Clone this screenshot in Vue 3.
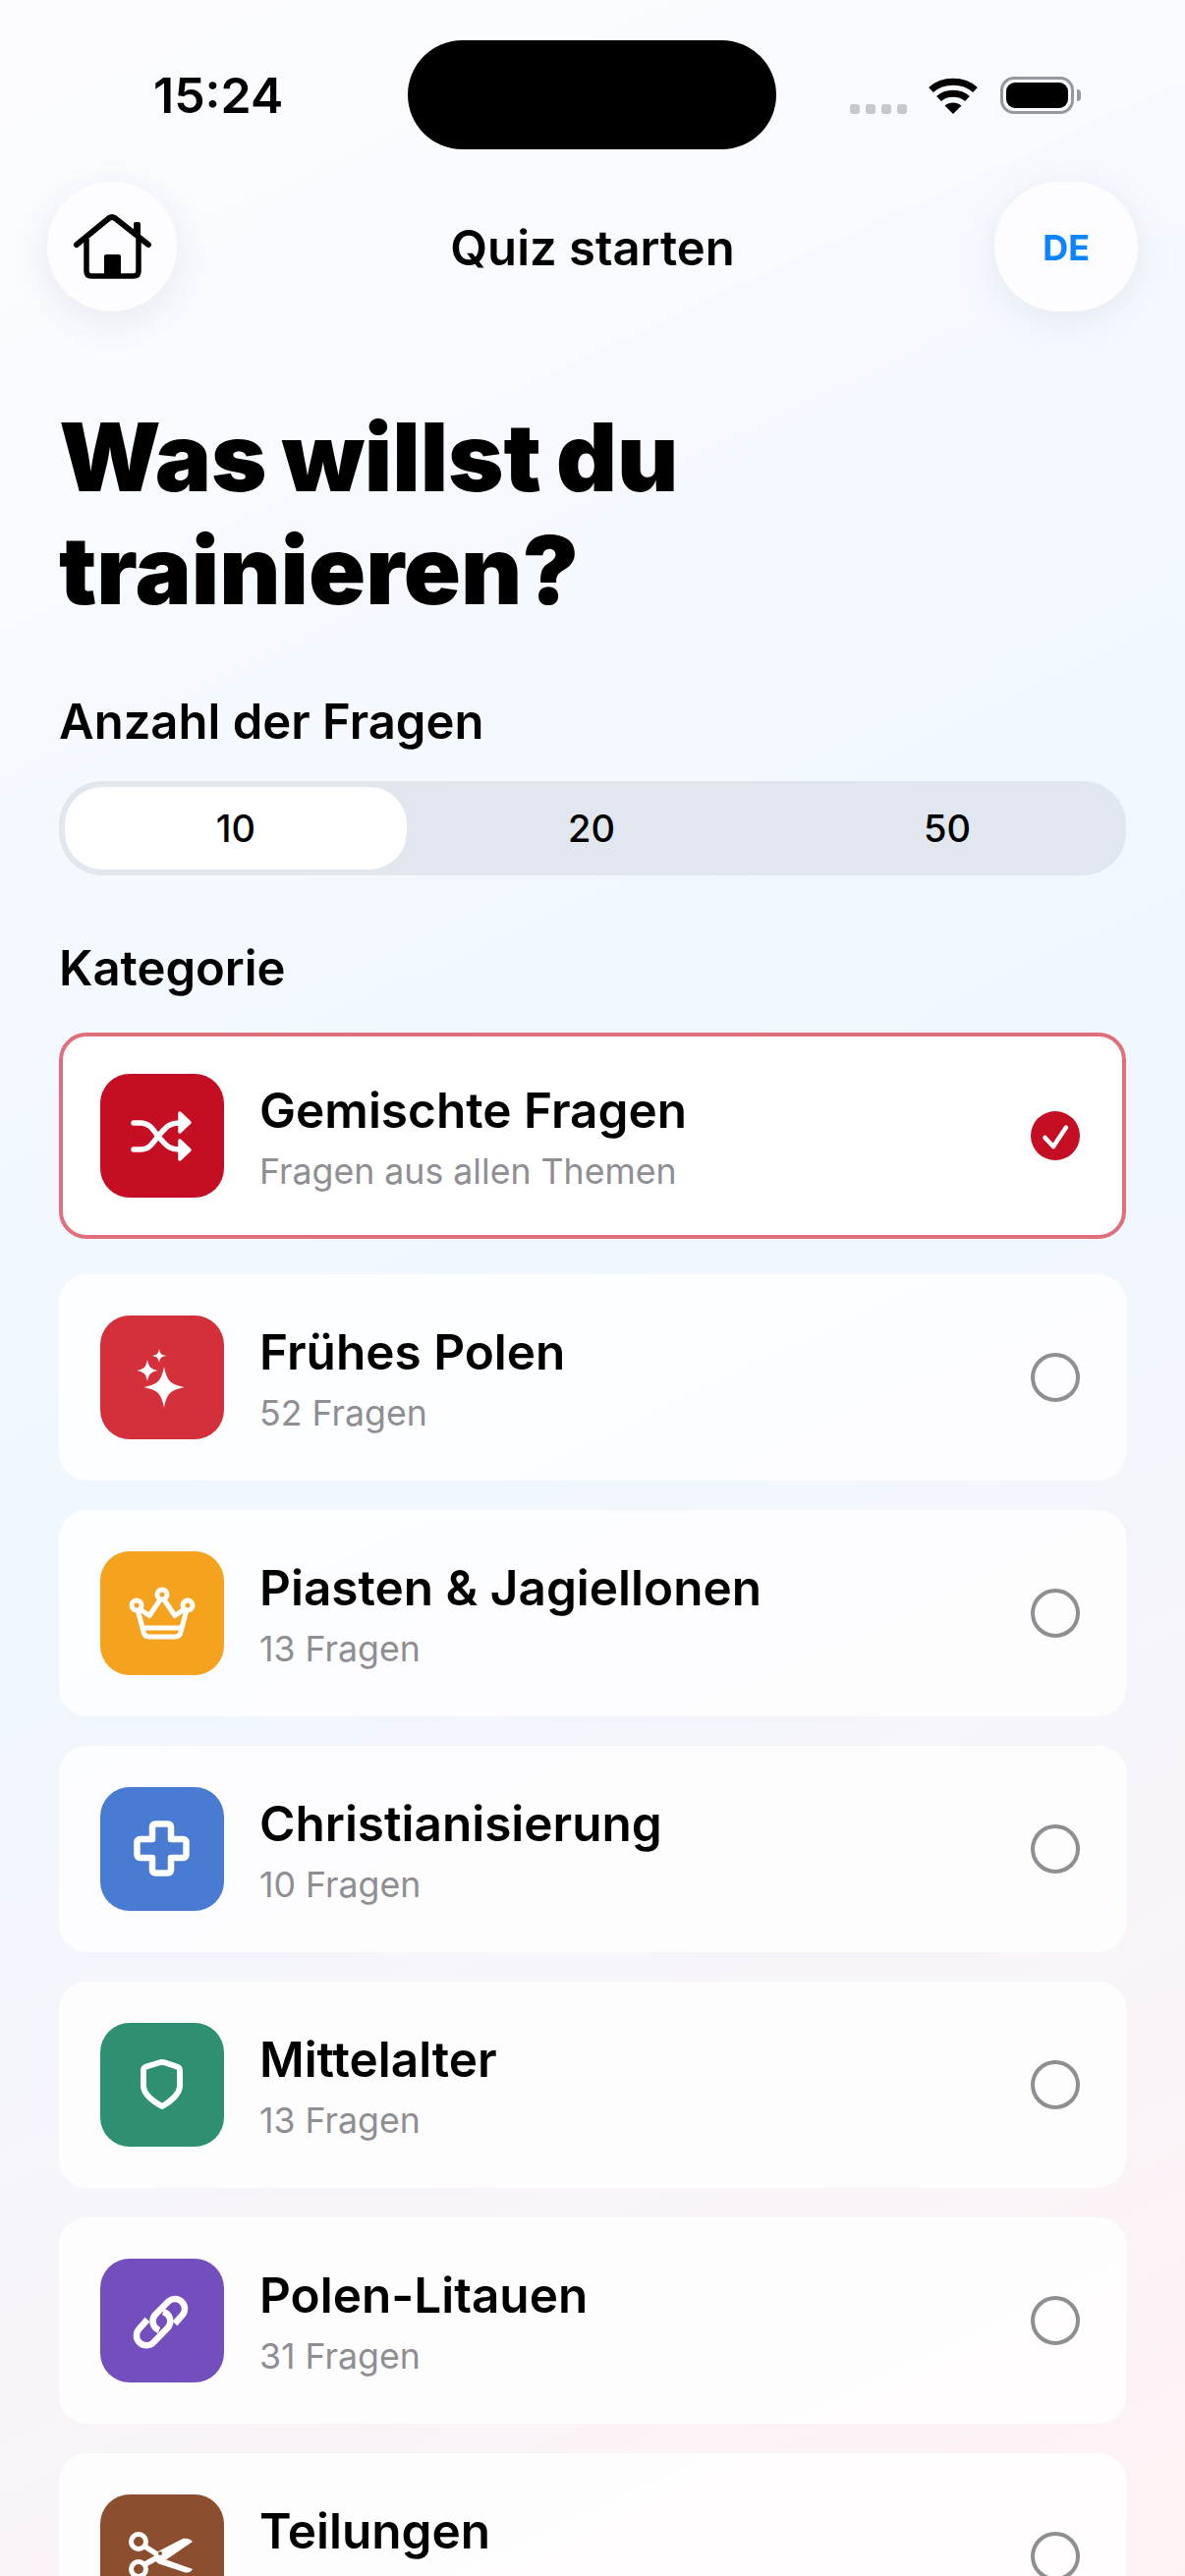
<template>
  <div class="screen">
    <div class="status-bar">
      <span class="time">15:24</span>
      <div class="island"></div>
      <div class="status-icons">
        <div class="signal">
          <i v-for="n in 4" :key="n"></i>
        </div>
        <svg class="wifi" width="50" height="37" viewBox="0 0 50 37">
          <path d="M2.5 12.5C14.5 1.5 35.5 1.5 47.5 12.5" fill="none" stroke="#000" stroke-width="7" />
          <path d="M10.5 21.5C18 14.5 32 14.5 39.5 21.5" fill="none" stroke="#000" stroke-width="7" />
          <path d="M25 37L16.5 28.5C21.5 24.5 28.5 24.5 33.5 28.5Z" fill="#000" />
        </svg>
        <div class="battery">
          <div class="battery-body"><div class="battery-fill"></div></div>
          <div class="battery-nub"></div>
        </div>
      </div>
    </div>

    <div class="nav">
      <button class="nav-btn home-btn">
        <svg width="132" height="132" viewBox="0 0 132 132">
          <path d="M30 64L63 37Q66 35 69 37L103 64" fill="none" stroke="#000" stroke-width="6" stroke-linecap="round" stroke-linejoin="round" />
          <path d="M40 58V91Q40 96 45 96H88Q93 96 93 91V58" fill="none" stroke="#000" stroke-width="5.5" />
          <path d="M88 55V43Q88 41 90 41H93Q95 41 95 43V60Z" fill="#000" />
          <path d="M58 96V76Q58 74 60 74H73Q75 74 75 76V96Z" fill="#000" />
        </svg>
      </button>
      <div class="nav-title">Quiz starten</div>
      <button class="nav-btn lang-btn">DE</button>
    </div>

    <div class="content">
      <h1 class="heading">Was willst du<br />trainieren?</h1>

      <div class="section-label count-label">Anzahl der Fragen</div>
      <div class="segment">
        <div
          v-for="c in counts"
          :key="c"
          class="segment-item"
          :class="{ active: c === count }"
        >{{ c }}</div>
      </div>

      <div class="section-label cat-label">Kategorie</div>
      <div class="cards">
        <div
          v-for="cat in categories"
          :key="cat.name"
          class="card"
          :class="{ selected: cat.selected }"
        >
          <div class="cat-icon" :style="{ background: cat.color }">
            <svg width="126" height="126" viewBox="0 0 126 126">
              <g v-if="cat.icon === 'shuffle'">
                <path d="M34 50H41C52 50 55 60 62 67C68 74 72 77 80 77H84" fill="none" stroke="#fff" stroke-width="5.5" stroke-linecap="round" />
                <path d="M34 77H41C52 77 55 67 62 60C68 53 72 50 80 50H84" fill="none" stroke="#fff" stroke-width="5.5" stroke-linecap="round" />
                <path d="M81 40L91 49.5L81 59Z" fill="#fff" stroke="#fff" stroke-width="3.5" stroke-linejoin="round" />
                <path d="M81 68L91 77.5L81 87Z" fill="#fff" stroke="#fff" stroke-width="3.5" stroke-linejoin="round" />
              </g>
              <g v-else-if="cat.icon === 'sparkles'" fill="#fff">
                <path :d="star(65, 73, 21)" />
                <path :d="star(48, 56, 11)" />
                <path :d="star(60, 41, 7)" />
              </g>
              <g v-else-if="cat.icon === 'crown'" fill="none" stroke="#fff" stroke-width="5" stroke-linejoin="round" stroke-linecap="round">
                <circle cx="37" cy="55" r="5" />
                <circle cx="63" cy="44" r="5" />
                <circle cx="89" cy="55" r="5" />
                <path d="M38.5 61L44 82Q45 87 50 87H76Q81 87 82 82L87.5 61" />
                <path d="M42 60L50 65.5L60.5 50" />
                <path d="M84 60L76 65.5L65.5 50" />
                <path d="M45 78H81" />
              </g>
              <path v-else-if="cat.icon === 'cross'" d="M56 37.5H69a3 3 0 0 1 3 3V53H84.5a3 3 0 0 1 3 3V69a3 3 0 0 1 -3 3H72V84.5a3 3 0 0 1 -3 3H56a3 3 0 0 1 -3 -3V72H40.5a3 3 0 0 1 -3 -3V56a3 3 0 0 1 3 -3H53V40.5a3 3 0 0 1 3 -3Z" fill="none" stroke="#fff" stroke-width="6.5" stroke-linejoin="round" />
              <path v-else-if="cat.icon === 'shield'" d="M60 40.5Q63 39.5 66 40.5L78 44.5Q81 45.5 81 48.5V64C81 72 72 80 63 85C54 80 44 72 44 64V48.5Q44 45.5 47 44.5Z" fill="none" stroke="#fff" stroke-width="6" stroke-linejoin="round" />
              <g v-else-if="cat.icon === 'link'" fill="none" stroke="#fff" stroke-width="6.5">
                <path d="M76 66L84 57A10 10 0 0 0 70 43L56 57A10 10 0 0 0 60 73" />
                <path d="M48 62L40 71A10 10 0 0 0 54 85.5L68 71A10 10 0 0 0 64 54" />
              </g>
              <g v-else-if="cat.icon === 'scissors'">
                <circle cx="39" cy="48" r="7.5" fill="none" stroke="#fff" stroke-width="5" />
                <circle cx="39" cy="76" r="7.5" fill="none" stroke="#fff" stroke-width="5" />
                <path d="M44 52L58 61M44 72L60 63" fill="none" stroke="#fff" stroke-width="5.5" />
                <path d="M55 60L84 45Q90 44 94 48L62 70Q58 71 55 66Z" fill="#fff" />
                <path d="M66 66L94 76Q91 81 85 79L58 70Z" fill="#fff" />
                <circle cx="61" cy="60" r="2" :fill="cat.color" />
              </g>
            </svg>
          </div>
          <div class="card-text">
            <div class="card-title">{{ cat.name }}</div>
            <div class="card-sub">{{ cat.sub }}</div>
          </div>
          <div class="radio" :class="{ checked: cat.selected }">
            <svg v-if="cat.selected" width="50" height="50" viewBox="0 0 50 50">
              <path d="M14.5 27L23 36L36 16.5" fill="none" stroke="#fff" stroke-width="4.5" stroke-linecap="round" stroke-linejoin="round" />
            </svg>
          </div>
        </div>
      </div>
    </div>
  </div>
</template>

<script setup>
const counts = [10, 20, 50]
const count = 10

// the last card runs off the screen, its count can't be read
const categories = [
  { name: 'Gemischte Fragen', sub: 'Fragen aus allen Themen', color: '#c50d23', icon: 'shuffle', selected: true },
  { name: 'Frühes Polen', sub: '52 Fragen', color: '#d4303c', icon: 'sparkles' },
  { name: 'Piasten & Jagiellonen', sub: '13 Fragen', color: '#f5a21e', icon: 'crown' },
  { name: 'Christianisierung', sub: '10 Fragen', color: '#4a7bd3', icon: 'cross' },
  { name: 'Mittelalter', sub: '13 Fragen', color: '#2e8f72', icon: 'shield' },
  { name: 'Polen-Litauen', sub: '31 Fragen', color: '#734fbe', icon: 'link' },
  { name: 'Teilungen', sub: '', color: '#8b4e2e', icon: 'scissors' }
]

// four-pointed sparkle
const star = (x, y, r) => {
  const a = r * 0.14
  const b = r * 0.3
  return `M${x} ${y - r}C${x + a} ${y - b} ${x + b} ${y - a} ${x + r} ${y}C${x + b} ${y + a} ${x + a} ${y + b} ${x} ${y + r}C${x - a} ${y + b} ${x - b} ${y + a} ${x - r} ${y}C${x - b} ${y - a} ${x - a} ${y - b} ${x} ${y - r}Z`
}
</script>

<style>
html,
body {
  margin: 0;
  padding: 0;
}
</style>

<style scoped>
.screen {
  width: 1206px;
  height: 2622px;
  overflow: hidden;
  font-family: Inter, "Liberation Sans", sans-serif;
  color: #000;
  background: linear-gradient(155deg, #fcfcff 0%, #eff7ff 50%, #fff2f4 100%);
}

.status-bar {
  height: 185px;
  box-sizing: border-box;
  padding-top: 41px;
  display: grid;
  grid-template-columns: 415px 375px 1fr;
  align-items: start;
}

.time {
  margin: 41px 0 0 156px;
  font-size: 50px;
  line-height: 30px;
  font-weight: 600;
}

.island {
  height: 111px;
  background: #000;
  border-radius: 56px;
}

.status-icons {
  display: flex;
  align-items: flex-start;
  padding: 37px 0 0 75px;
}

.signal {
  display: flex;
  gap: 6px;
  margin-top: 28px;
}

.signal i {
  display: block;
  width: 10px;
  height: 10px;
  border-radius: 3px;
  background: #c7c7cc;
}

.wifi {
  margin: 1px 0 0 22px;
}

.battery {
  display: flex;
  align-items: center;
  margin-left: 23px;
}

.battery-body {
  width: 75px;
  height: 38px;
  box-sizing: border-box;
  border: 3px solid #97979c;
  border-radius: 14px;
  padding: 3px;
}

.battery-fill {
  height: 100%;
  background: #000;
  border-radius: 9px;
}

.battery-nub {
  width: 4px;
  height: 12px;
  margin-left: 3px;
  background: #97979c;
  border-radius: 0 4px 4px 0;
}

.nav {
  display: grid;
  grid-template-columns: 1fr auto 1fr;
  align-items: center;
  padding: 0 48px;
}

.nav-btn {
  height: 132px;
  padding: 0;
  border: none;
  border-radius: 66px;
  background: #fdfdff;
  box-shadow: 0 10px 40px rgba(20, 30, 70, 0.08);
  font-family: inherit;
}

.home-btn {
  width: 132px;
  justify-self: start;
}

.home-btn svg {
  display: block;
}

.lang-btn {
  width: 146px;
  padding-top: 2px;
  justify-self: end;
  color: #0a84ff;
  font-size: 36px;
  font-weight: 700;
}

.nav-title {
  padding-top: 2px;
  font-size: 49px;
  font-weight: 600;
}

.content {
  padding: 91px 60px 0;
}

.heading {
  margin: 0;
  font-size: 96px;
  line-height: 115px;
  font-weight: 900;
  word-spacing: -4px;
}

.section-label {
  font-size: 49px;
  line-height: 60px;
  font-weight: 600;
}

.count-label {
  margin-top: 67px;
}

.cat-label {
  margin-top: 65px;
}

.segment {
  margin-top: 30px;
  height: 96px;
  box-sizing: border-box;
  padding: 6px 8px 6px 6px;
  display: grid;
  grid-template-columns: repeat(3, 1fr);
  gap: 14px;
  border-radius: 44px;
  background: #e2e6ee;
}

.segment-item {
  display: flex;
  align-items: center;
  justify-content: center;
  font-size: 38px;
  font-weight: 500;
  border-radius: 38px;
}

.segment-item.active {
  background: #fff;
}

.cards {
  margin-top: 35px;
  display: flex;
  flex-direction: column;
  gap: 30px;
}

.card {
  height: 210px;
  box-sizing: border-box;
  display: flex;
  align-items: center;
  padding: 0 47px 0 42px;
  background: rgba(255, 255, 255, 0.8);
  border-radius: 28px;
}

.card.selected {
  margin-bottom: 6px;
  padding: 0 43px 0 38px;
  background: #fff;
  border: 4px solid #de6f7b;
}

.cat-icon {
  width: 126px;
  height: 126px;
  flex-shrink: 0;
  border-radius: 30px;
}

.cat-icon svg {
  display: block;
}

.card-text {
  flex: 1;
  margin-left: 36px;
  padding-top: 2px;
}

.card-title {
  font-size: 49.5px;
  line-height: 62px;
  font-weight: 600;
}

.card-sub {
  margin-top: 8px;
  min-height: 46px;
  font-size: 35.7px;
  line-height: 46px;
  color: #8e8e93;
}

.radio {
  width: 50px;
  height: 50px;
  box-sizing: border-box;
  border: 4px solid #8e8e93;
  border-radius: 50%;
}

.radio.checked {
  border: none;
  background: #c50d23;
}

.radio svg {
  display: block;
}
</style>
